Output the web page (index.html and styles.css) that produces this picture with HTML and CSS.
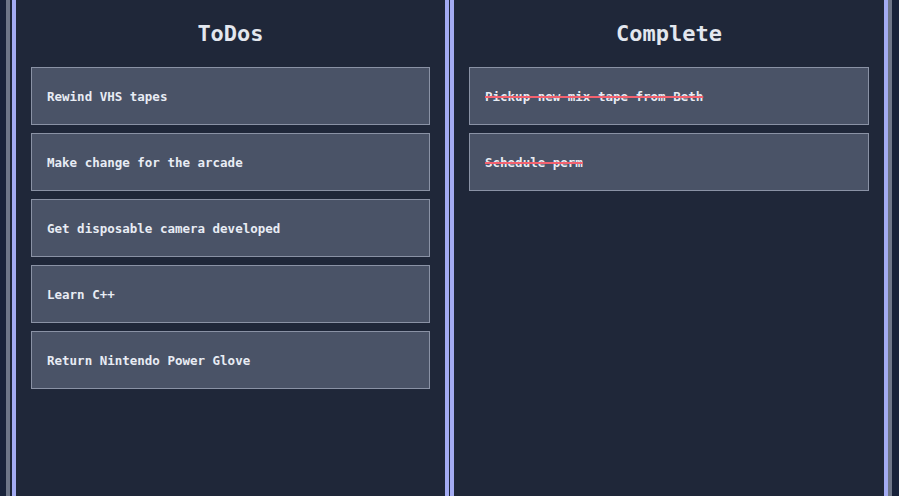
FILE: index.html
```
<!DOCTYPE html>
<html lang="en">
<head>
<meta charset="utf-8">
<title>ToDos</title>
<link rel="stylesheet" href="styles.css">
</head>
<body>
<div class="frame">
  <section class="panel panel-left">
    <h2 class="title">ToDos</h2>
    <ul class="list">
      <li class="card">Rewind VHS tapes</li>
      <li class="card">Make change for the arcade</li>
      <li class="card">Get disposable camera developed</li>
      <li class="card">Learn C++</li>
      <li class="card">Return Nintendo Power Glove</li>
    </ul>
  </section>
  <section class="panel panel-right">
    <h2 class="title">Complete</h2>
    <ul class="list">
      <li class="card done">Pickup new mix tape from Beth</li>
      <li class="card done">Schedule perm</li>
    </ul>
  </section>
</div>
</body>
</html>
```

FILE: styles.css
```
html, body {
  height: 100%;
}
body {
  margin: 0;
  background: #18223a;
  padding: 0 7px 0 6px;
  box-sizing: border-box;
  font-family: "DejaVu Sans Mono", "Liberation Mono", monospace;
  overflow: hidden;
}
.frame {
  display: flex;
  height: 100%;
  border-left: 4px solid #6d7588;
  border-right: 4px solid #6d7588;
  padding-left: 2px;
  gap: 1px;
  background: #1c2437;
}
.panel {
  background: #1f2739;
  border-left: 4px solid #a3abf2;
  border-right: 4px solid #a3abf2;
  padding: 17px 15px 0;
  box-sizing: border-box;
}
.panel-left {
  width: 437px;
}
.panel-right {
  width: 438px;
}
.title {
  margin: 0 0 16px;
  font-size: 22px;
  line-height: 34px;
  font-weight: bold;
  color: #e3e7ef;
  text-align: center;
}
.list {
  list-style: none;
  margin: 0;
  padding: 0;
  display: flex;
  flex-direction: column;
  gap: 8px;
}
.card {
  background: #4a5367;
  border: 1px solid #8a92a5;
  padding: 21px 15px 19px;
  font-size: 12.5px;
  line-height: 16px;
  font-weight: bold;
  color: #e8ecf4;
}
.done {
  text-decoration-line: line-through;
  text-decoration-color: #f2616f;
  text-decoration-thickness: 1.5px;
}
```
